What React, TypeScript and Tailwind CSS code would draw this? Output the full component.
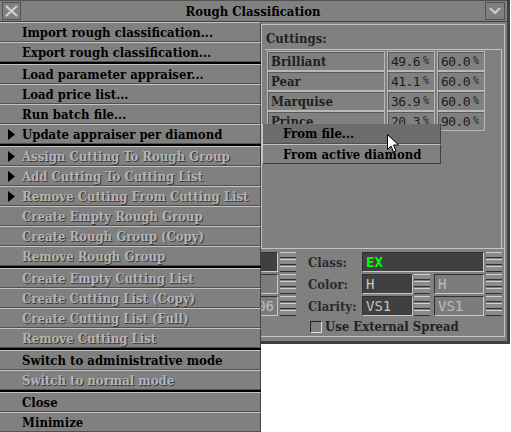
import React from "react";

const F = "font-['DejaVu_Serif_Condensed','DejaVu_Serif',serif] font-bold";

type Item = { label: string; disabled?: boolean; arrow?: boolean };

const groups: Item[][] = [
  [{ label: "Import rough classification..." }, { label: "Export rough classification..." }],
  [
    { label: "Load parameter appraiser..." },
    { label: "Load price list..." },
    { label: "Run batch file..." },
    { label: "Update appraiser per diamond", arrow: true },
  ],
  [
    { label: "Assign Cutting To Rough Group", disabled: true, arrow: true },
    { label: "Add Cutting To Cutting List", disabled: true, arrow: true },
    { label: "Remove Cutting From Cutting List", disabled: true, arrow: true },
    { label: "Create Empty Rough Group", disabled: true },
    { label: "Create Rough Group (Copy)", disabled: true },
    { label: "Remove Rough Group", disabled: true },
  ],
  [
    { label: "Create Empty Cutting List", disabled: true },
    { label: "Create Cutting List (Copy)", disabled: true },
    { label: "Create Cutting List (Full)", disabled: true },
    { label: "Remove Cutting List", disabled: true },
  ],
  [{ label: "Switch to administrative mode" }, { label: "Switch to normal mode", disabled: true }],
  [{ label: "Close" }, { label: "Minimize" }],
];

const cuttings = [
  { name: "Brilliant", a: "49.6", b: "60.0" },
  { name: "Pear", a: "41.1", b: "60.0" },
  { name: "Marquise", a: "36.9", b: "60.0" },
  { name: "Prince", a: "20.3", b: "90.0" },
];

function MenuRow({ item }: { item: Item }) {
  return (
    <div className="h-[20px] flex items-center bg-[#808080] border-t border-t-[#c4c4c4] border-b border-b-[#505050] border-r border-r-[#404040]">
      <div className="w-[22px] flex justify-center">
        {item.arrow && (
          <svg width="7" height="11" viewBox="0 0 7 11">
            <path d="M0 0 L7 5.5 L0 11 Z" fill="#000" />
          </svg>
        )}
      </div>
      <span
        className={`${F} text-[13px] leading-none whitespace-nowrap ${
          item.disabled ? "text-[#b4b4b4] [text-shadow:1px_1px_0_#3a3a3a]" : "text-black"
        }`}
      >
        {item.label}
      </span>
    </div>
  );
}

function Spinner() {
  return (
    <div className="w-[16px] h-[20px] flex flex-col gap-[1px]">
      {[0, 1, 2].map((i) => (
        <div key={i} className="flex-1 bg-[#8a8a8a] border-t border-t-[#d0d0d0] border-b border-b-[#303030]" />
      ))}
    </div>
  );
}

function Field({
  value,
  dark,
  w,
  green,
  right,
}: {
  value: string;
  dark?: boolean;
  w: string;
  green?: boolean;
  right?: boolean;
}) {
  return (
    <div
      className={`${w} h-[20px] flex items-center px-[3px] border border-t-[#303030] border-l-[#303030] border-b-[#c8c8c8] border-r-[#c8c8c8] ${
        dark ? "bg-[#404040]" : "bg-[#7c7c7c]"
      } ${right ? "justify-end" : ""}`}
    >
      <span
        className={`font-['DejaVu_Sans_Mono',monospace] text-[14px] leading-none ${
          green ? "text-[#00ff00] font-bold" : dark ? "text-[#c4c4c4]" : "text-[#bdbdbd]"
        }`}
      >
        {value}
      </span>
    </div>
  );
}

function Cell({ children, w }: { children: React.ReactNode; w: string }) {
  return (
    <div className={`${w} h-[20px] flex items-center px-[3px] border border-[#b8b8b8] shadow-[inset_1px_1px_0_#5a5a5a]`}>
      {children}
    </div>
  );
}

function Pct({ v }: { v: string }) {
  return (
    <Cell w="w-[48px]">
      <span className="font-['DejaVu_Sans_Mono',monospace] text-[13px] tracking-[-0.6px] leading-none text-[#1c1c1c]">{v}</span>
      <span className="ml-[3px] font-['DejaVu_Sans_Mono',monospace] text-[10px] leading-none text-[#1c1c1c]">%</span>
    </Cell>
  );
}

export default function App() {
  return (
    <div className="relative w-[511px] h-[432px] bg-white overflow-hidden">
      {/* window */}
      <div className="w-[510px] h-[344px] bg-[#808080] border-r-[3px] border-b-[3px] border-[#404040] flex flex-col">
        <div className="h-[22px] flex items-center border-b border-b-[#404040] border-t border-t-[#505050] px-[2px]">
          <div className="w-[19px] h-[18px] flex items-center justify-center border border-[#505050]">
            <svg width="13" height="12" viewBox="0 0 13 12">
              <path d="M1 1 L12 11 M12 1 L1 11" stroke="#cfcfcf" strokeWidth="2.2" />
            </svg>
          </div>
          <div className={`${F} flex-1 text-center text-[13px] text-black leading-none`}>Rough Classification</div>
          <div className="w-[20px] h-[18px] flex items-center justify-center border border-[#505050]">
            <svg width="12" height="8" viewBox="0 0 12 8">
              <path d="M1 1 L6 6 L11 1" stroke="#cfcfcf" strokeWidth="2" fill="none" />
            </svg>
          </div>
        </div>

        <div className="flex mt-[2px]">
          <div className="w-[261px]" />
          <div className="w-[244px] h-[225px] border border-[#c4c4c4] flex flex-col">
            <div className="h-[24px] flex items-center pl-[4px] pt-[2px]">
              <span className={`${F} text-[13px] leading-none text-[#222]`}>Cuttings:</span>
            </div>
            <div className="ml-[3px] w-[237px] flex-1 border-t border-r border-[#c4c4c4] pt-[1px] pl-[2px]">
              {cuttings.map((c) => (
                <div key={c.name} className="flex gap-[2px]">
                  <Cell w="w-[118px]">
                    <span className={`${F} text-[13px] leading-none text-[#1e1e1e]`}>{c.name}</span>
                  </Cell>
                  <Pct v={c.a} />
                  <Pct v={c.b} />
                </div>
              ))}
            </div>
          </div>
        </div>

        <div className="ml-[261px] w-[244px] h-[88px] border-r border-b border-[#c4c4c4]" />
      </div>

      {/* lower field rows, peeking out from behind the menu */}
      <div className="absolute left-[206px] top-[252px] flex flex-col gap-[2px]">
        {[
          { label: "Class:", full: true },
          { label: "Color:", v: "H" },
          { label: "Clarity:", v: "VS1" },
        ].map((r, i) => (
          <div key={r.label} className="flex items-center">
            <Field w="w-[72px]" value={i === 2 ? "0.06" : ""} dark={i === 0} right />
            <div className="ml-[2px]">
              <Spinner />
            </div>
            <span className={`${F} ml-[12px] w-[54px] text-[13px] leading-none text-[#2a2a2a]`}>{r.label}</span>
            {r.full ? (
              <>
                <Field w="w-[122px]" value="EX" dark green />
                <div className="ml-[2px]">
                  <Spinner />
                </div>
              </>
            ) : (
              <>
                <Field w="w-[51px]" value={r.v!} dark />
                <div className="ml-[1px]">
                  <Spinner />
                </div>
                <div className="ml-[4px]">
                  <Field w="w-[50px]" value={r.v!} dark={false} />
                </div>
                <div className="ml-[2px]">
                  <Spinner />
                </div>
              </>
            )}
          </div>
        ))}
        <div className="flex items-center ml-[104px] mt-[2px]">
          <div className="w-[12px] h-[12px] border border-t-[#202020] border-l-[#202020] border-b-[#e0e0e0] border-r-[#e0e0e0]" />
          <span className={`${F} ml-[3px] text-[13px] leading-none text-[#222]`}>Use External Spread</span>
        </div>
      </div>

      {/* popup menu */}
      <div className="absolute left-0 top-[22px] w-[261px] flex flex-col">
        {groups.map((g, gi) => (
          <div key={gi} className={gi > 0 ? "border-t-2 border-black" : ""}>
            {g.map((it) => (
              <MenuRow key={it.label} item={it} />
            ))}
          </div>
        ))}
      </div>

      {/* submenu */}
      <div className="absolute left-[262px] top-[124px] w-[179px] flex flex-col border-l border-[#c4c4c4]">
        <div className="h-[20px] flex items-center pl-[20px] bg-[#6c6c6c] border-b border-b-[#505050] border-r border-r-[#404040]">
          <span className={`${F} text-[13px] leading-none text-black`}>From file...</span>
        </div>
        <div className="h-[20px] flex items-center pl-[20px] bg-[#808080] border-t border-t-[#c4c4c4] border-b border-b-[#404040] border-r border-r-[#404040]">
          <span className={`${F} text-[13px] leading-none text-black`}>From active diamond</span>
        </div>
      </div>

      {/* mouse cursor */}
      <svg className="absolute left-[387px] top-[134px]" width="13" height="20" viewBox="0 0 13 20">
        <path d="M0.5 0.5 L0.5 15.5 L4 12 L6.5 18 L9 17 L6.5 11 L11.5 11 Z" fill="#fff" stroke="#000" strokeWidth="1" />
      </svg>
    </div>
  );
}
